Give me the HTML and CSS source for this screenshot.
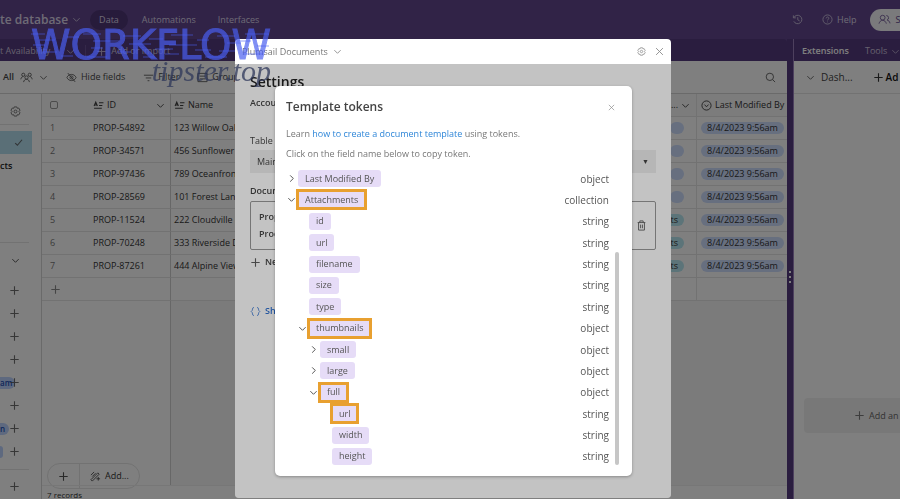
FILE: index.html
```html
<!DOCTYPE html>
<html lang="en">
<head>
    <meta charset="UTF-8">
    <meta name="viewport" content="width=device-width, initial-scale=1.0">
    <title>Template tokens</title>
    <link rel="stylesheet" href="styles.css">
</head>
<body>
    <svg class="sprite" aria-hidden="true">
        <symbol id="down" viewBox="0 0 10 10"><path d="M1.5 3.5 5 7l3.5-3.5"/></symbol>
        <symbol id="right" viewBox="0 0 10 10"><path d="M3.5 1.5 7 5 3.5 8.5"/></symbol>
        <symbol id="plus" viewBox="0 0 10 10"><path d="M5 1.2v7.6M1.2 5h7.6"/></symbol>
        <symbol id="close" viewBox="0 0 10 10"><path d="M1.2 1.2l7.6 7.6M8.8 1.2 1.2 8.8"/></symbol>
        <symbol id="check" viewBox="0 0 10 10"><path d="M2 5.5 4 7.500l4.200-5"/></symbol>
        <symbol id="gear" viewBox="0 0 12 12"><path d="M4.600 1h2.800l.5 1.500 1.600-.3 1.400 2.400L9.800 6l1.100 1.400-1.400 2.400-1.600-.3-.5 1.500H4.600l-.5-1.500-1.600.3-1.400-2.400L2.200 6 1.100 4.600l1.400-2.400 1.600.3z"/><circle cx="6" cy="6" r="1.600"/></symbol>
        <symbol id="people" viewBox="0 0 14 12"><circle cx="5" cy="4" r="2.6"/><path d="M1 10.5c.6-2.2 2-3.6 4-3.6s3.400 1.400 4 3.600M9 1.600a2.600 2.600 0 0 1 .8 5c1.700.2 2.800 1.700 3.200 3.600"/></symbol>
        <symbol id="team" viewBox="0 0 14 12"><circle cx="3.500" cy="3" r="1.700"/><circle cx="10.500" cy="3" r="1.700"/><circle cx="7" cy="6" r="1.800"/><path d="M.8 8c.3-1.800 1.200-3 2.700-3M13.200 8c-.3-1.800-1.200-3-2.700-3M3.800 11c.4-2 1.500-3 3.200-3s2.800 1 3.200 3"/></symbol>
        <symbol id="history" viewBox="0 0 12 12"><path d="M2 4a4.600 4.600 0 1 1 0 4M1.500 1.500V4.200h2.700M6.300 3.500v2.800l2 1.200"/></symbol>
        <symbol id="help" viewBox="0 0 12 12"><circle cx="6" cy="6" r="5"/><path d="M4.500 4.800c0-2 3-2 3-.2C7.500 5.800 6 5.800 6 7M6 8.300v.8"/></symbol>
        <symbol id="hide" viewBox="0 0 12 12"><path d="M1 6c2-4.500 8-4.500 10 0-2 4.500-8 4.500-10 0zM2 1.200l8 9.600"/><circle cx="6" cy="6" r="1.700"/></symbol>
        <symbol id="filter" viewBox="0 0 12 12"><path d="M1 3.500h10M3 6.500h6M5 9.500h2"/></symbol>
        <symbol id="group" viewBox="0 0 12 12"><path d="M1 1.500h10v9H1zM3 4.500h6M3 7.500h6"/></symbol>
        <symbol id="search" viewBox="0 0 12 12"><circle cx="5.300" cy="5.300" r="4"/><path d="M8.300 8.300 11 11"/></symbol>
        <symbol id="text" viewBox="0 0 10 10"><path d="M1 5.500 2.500 2 4 5.500M1.500 4.500h2M5.500 2.500h4M5.500 5h3M1 7.500h7"/></symbol>
        <symbol id="option" viewBox="0 0 12 12"><circle cx="6" cy="6" r="5"/><path d="M3.800 5 6 7.400 8.200 5"/></symbol>
        <symbol id="wand" viewBox="0 0 12 12"><path d="M1 9.500 8.500 2l1.500 1.500L2.500 11zM1 4.500 4.500 1M2.500 6 6 2.500M9 6.500v4M7 8.500h4"/></symbol>
        <symbol id="trash" viewBox="0 0 10 12"><path d="M.8 2.800h8.400M3.200 2.800V1h3.600v1.800M1.800 2.800v8.200h6.400V2.800M4 5v4M6 5v4"/></symbol>
        <symbol id="braces" viewBox="0 0 12 12"><path d="M4.200 1.500C2 1.500 3.500 5 1.300 6c2.200 1 .7 4.500 2.900 4.500M7.800 1.500c2.200 0 .7 3.500 2.900 4.500-2.200 1-.7 4.500-2.900 4.500"/></symbol>
    </svg>

    <div class="app">
        <header class="topbar">
            <h1 class="base-name">te database <svg class="icon small"><use href="#down"/></svg></h1>
            <nav class="main-nav">
                <a class="current" href="#">Data</a>
                <a href="#">Automations</a>
                <a href="#">Interfaces</a>
            </nav>
            <div class="top-actions">
                <button aria-label="History"><svg class="icon"><use href="#history"/></svg></button>
                <button><svg class="icon"><use href="#help"/></svg> Help</button>
                <button class="share"><svg class="icon wide"><use href="#people"/></svg> Sh</button>
            </div>
        </header>

        <div class="workspace">
            <main class="base">
                <div class="tabs">
                    <a href="#">t Availability</a>
                    <svg class="icon small tab-arrow"><use href="#down"/></svg>
                    <button class="add-tab"><svg class="icon"><use href="#plus"/></svg> Add or import</button>
                </div>
                <div class="toolbar">
                    <button class="view-name">All <svg class="icon wide"><use href="#team"/></svg> <svg class="icon small"><use href="#down"/></svg></button>
                    <button><svg class="icon"><use href="#hide"/></svg> Hide fields</button>
                    <button><svg class="icon"><use href="#filter"/></svg> Filter</button>
                    <button><svg class="icon"><use href="#group"/></svg> Group</button>
                    <button class="search" aria-label="Search"><svg class="icon"><use href="#search"/></svg></button>
                </div>
                <div class="content">
                    <aside class="sidebar">
                        <div class="side-head"><svg class="icon"><use href="#gear"/></svg></div>
                        <div class="side-views">
                            <div class="side-row selected"><svg class="icon"><use href="#check"/></svg></div>
                            <div class="side-row label">cts</div>
                        </div>
                        <div class="side-create">
                            <div class="side-row"><svg class="icon small dark"><use href="#down"/></svg></div>
                            <div class="side-list">
                                <div class="side-row"><svg class="icon"><use href="#plus"/></svg></div>
                                <div class="side-row"><svg class="icon"><use href="#plus"/></svg></div>
                                <div class="side-row"><svg class="icon"><use href="#plus"/></svg></div>
                                <div class="side-row"><svg class="icon"><use href="#plus"/></svg></div>
                                <div class="side-row"><span class="plan">am</span><svg class="icon"><use href="#plus"/></svg></div>
                                <div class="side-row"><svg class="icon"><use href="#plus"/></svg></div>
                                <div class="side-row"><span class="plan short">n</span><svg class="icon"><use href="#plus"/></svg></div>
                                <div class="side-row"><span class="plan empty"></span><svg class="icon"><use href="#plus"/></svg></div>
                            </div>
                        </div>
                        <div class="side-foot"><svg class="icon"><use href="#plus"/></svg></div>
                    </aside>
                    <section class="grid">
                        <table>
                            <colgroup><col class="col-num"><col class="col-id"><col><col class="col-tag"><col class="col-date"></colgroup>
                            <thead>
                                <tr>
                                    <th><input type="checkbox" aria-label="Select all"></th>
                                    <th><div class="field"><svg class="icon"><use href="#text"/></svg> ID <svg class="icon small end"><use href="#down"/></svg></div></th>
                                    <th><div class="field"><svg class="icon"><use href="#text"/></svg> Name</div></th>
                                    <th><div class="field"><span class="end">l...</span> <svg class="icon small"><use href="#down"/></svg></div></th>
                                    <th><div class="field"><svg class="icon"><use href="#option"/></svg> Last Modified By</div></th>
                                </tr>
                            </thead>
                            <tbody>
                                <tr><td>1</td><td>PROP-54892</td><td>123 Willow Oak</td><td><span class="tag">&nbsp;</span></td><td><span class="tag">8/4/2023 9:56am</span></td></tr>
                                <tr><td>2</td><td>PROP-34571</td><td>456 Sunflower .</td><td><span class="tag">&nbsp;</span></td><td><span class="tag">8/4/2023 9:56am</span></td></tr>
                                <tr><td>3</td><td>PROP-97436</td><td>789 Oceanfront</td><td><span class="tag">&nbsp;</span></td><td><span class="tag">8/4/2023 9:56am</span></td></tr>
                                <tr><td>4</td><td>PROP-28569</td><td>101 Forest Lane</td><td><span class="tag">&nbsp;</span></td><td><span class="tag">8/4/2023 9:56am</span></td></tr>
                                <tr><td>5</td><td>PROP-11524</td><td>222 Cloudville I</td><td><span class="tag cyan">cts</span></td><td><span class="tag">8/4/2023 9:56am</span></td></tr>
                                <tr><td>6</td><td>PROP-70248</td><td>333 Riverside D</td><td><span class="tag cyan">cts</span></td><td><span class="tag">8/4/2023 9:56am</span></td></tr>
                                <tr><td>7</td><td>PROP-87261</td><td>444 Alpine View</td><td><span class="tag cyan">cts</span></td><td><span class="tag">8/4/2023 9:56am</span></td></tr>
                                <tr><td><svg class="icon"><use href="#plus"/></svg></td><td></td><td></td><td></td><td></td></tr>
                            </tbody>
                        </table>
                        <div class="grid-rest">
                            <div class="add-pill">
                                <button aria-label="Add record"><svg class="icon"><use href="#plus"/></svg></button>
                                <button><svg class="icon"><use href="#wand"/></svg> Add...</button>
                            </div>
                        </div>
                        <footer class="grid-foot">7 records</footer>
                    </section>
                </div>
            </main>

            <div class="splitter"><span class="grip"></span></div>

            <aside class="extensions">
                <div class="tabs">
                    <strong>Extensions</strong>
                    <button class="tools">Tools <svg class="icon small"><use href="#down"/></svg></button>
                </div>
                <div class="toolbar">
                    <button><svg class="icon small"><use href="#down"/></svg> Dash...</button>
                    <button class="add-ext"><svg class="icon"><use href="#plus"/></svg> Ad</button>
                </div>
                <button class="add-box"><svg class="icon"><use href="#plus"/></svg> Add an</button>
            </aside>
        </div>
    </div>

    <div class="backdrop">
        <div class="modal">
            <div class="modal-head">
                <span>Plumsail Documents</span>
                <svg class="icon small"><use href="#down"/></svg>
                <button class="end" aria-label="Extension settings"><svg class="icon small"><use href="#gear"/></svg></button>
                <button aria-label="Close extension"><svg class="icon small"><use href="#close"/></svg></button>
            </div>
            <div class="modal-body">
                <h2>Settings</h2>
                <p class="account">Accou</p>
                <label for="table">Table</label>
                <div class="select">
                    <select id="table"><option>Main</option></select>
                    <span class="arrow">▼</span>
                </div>
                <p class="docs-label">Docum</p>
                <div class="doc-box">
                    <div class="doc-text">
                        <span>Prop</span>
                        <span>Proc</span>
                    </div>
                    <button aria-label="Delete"><svg class="icon"><use href="#trash"/></svg></button>
                </div>
                <button class="new"><svg class="icon"><use href="#plus"/></svg> Ne</button>
                <button class="show"><svg class="icon"><use href="#braces"/></svg> Sh</button>

                <div class="dialog-layer">
                    <div class="dialog" role="dialog" aria-labelledby="dialog-title">
                        <div class="dialog-head">
                            <h2 id="dialog-title">Template tokens</h2>
                            <button aria-label="Close"><svg class="icon"><use href="#close"/></svg></button>
                        </div>
                        <p>Learn <a href="#">how to create a document template</a> using tokens.</p>
                        <p>Click on the field name below to copy token.</p>
                        <div class="token-area">
                            <ul class="tokens">
                                <li><svg class="icon"><use href="#right"/></svg><button class="chip">Last Modified By</button><span class="type">object</span></li>
                                <li><svg class="icon"><use href="#down"/></svg><button class="chip marked">Attachments</button><span class="type">collection</span></li>
                                <li class="level-1"><button class="chip">id</button><span class="type">string</span></li>
                                <li class="level-1"><button class="chip">url</button><span class="type">string</span></li>
                                <li class="level-1"><button class="chip">filename</button><span class="type">string</span></li>
                                <li class="level-1"><button class="chip">size</button><span class="type">string</span></li>
                                <li class="level-1"><button class="chip">type</button><span class="type">string</span></li>
                                <li class="level-1"><svg class="icon"><use href="#down"/></svg><button class="chip marked">thumbnails</button><span class="type">object</span></li>
                                <li class="level-2"><svg class="icon"><use href="#right"/></svg><button class="chip">small</button><span class="type">object</span></li>
                                <li class="level-2"><svg class="icon"><use href="#right"/></svg><button class="chip">large</button><span class="type">object</span></li>
                                <li class="level-2"><svg class="icon"><use href="#down"/></svg><button class="chip marked">full</button><span class="type">object</span></li>
                                <li class="level-3"><button class="chip marked">url</button><span class="type">string</span></li>
                                <li class="level-3"><button class="chip">width</button><span class="type">string</span></li>
                                <li class="level-3"><button class="chip">height</button><span class="type">string</span></li>
                            </ul>
                            <div class="scrollbar"></div>
                        </div>
                    </div>
                </div>
            </div>
        </div>
    </div>

    <div class="watermark">
        <div class="mark-main">WORKFLOW</div>
        <div class="mark-sub">tipster.top</div>
        <svg class="mark-lines" viewBox="0 0 242 34" aria-hidden="true">
            <path d="M0 6h14M8 12h16M36 9h12M2 17h12M12 24h14M30 28h12M52 6h18M62 13h26M60 20h12M56 29h20M92 8h18M98 16h22M86 24h14M118 11h14M124 21h18M112 29h12M140 7h22M138 17h28M134 26h14M166 12h12M164 22h16M174 29h22M186 8h18M196 15h14M188 23h16M214 6h24M206 13h14M226 18h12M212 26h20"/>
        </svg>
    </div>
</body>
</html>
```
FILE: styles.css
```css
* {
    box-sizing: border-box;
}
body {
    margin: 0;
    font-family: "Open Sans", "Noto Sans", sans-serif;
    font-size: 9px;
    line-height: 12px;
    color: #333;
    overflow: hidden;
}
h1, h2, p, ul {
    margin: 0;
    padding: 0;
}
a {
    color: inherit;
    text-decoration: none;
}
button, select {
    display: flex;
    align-items: center;
    gap: 4px;
    padding: 0;
    border: none;
    background: none;
    color: inherit;
    font: inherit;
    white-space: nowrap;
}
.sprite {
    display: none;
}
.icon {
    width: 11px;
    height: 11px;
    flex-shrink: 0;
    fill: none;
    stroke: currentColor;
    stroke-width: 1;
    opacity: 0.85;
}
.icon.small {
    width: 9px;
    height: 9px;
}
.icon.wide {
    width: 13px;
}
.end {
    margin-left: auto;
}

/* application behind the modal */
.app {
    display: flex;
    flex-direction: column;
    height: 100vh;
    background: #62478f;
}
.topbar {
    display: flex;
    align-items: center;
    height: 39px;
    color: #ddd5ea;
}
.base-name {
    display: flex;
    align-items: center;
    gap: 4px;
    font-size: 12px;
    font-weight: 600;
    white-space: nowrap;
}
.main-nav {
    display: flex;
    align-items: center;
    margin-left: 9px;
    gap: 22px;
}
.main-nav .current {
    padding: 4px 9px;
    margin-right: -8px;
    border-radius: 10px;
    background: #4e3676;
}
.top-actions {
    display: flex;
    align-items: center;
    gap: 19px;
    width: 108px;
    margin-left: auto;
}
.share {
    padding: 5px 8px;
    margin-left: -5px;
    border-radius: 11px 0 0 11px;
    background: #f4f4f8;
    color: #62478f;
}
.workspace {
    display: flex;
    flex: 1;
    min-height: 0;
}
.base {
    display: flex;
    flex-direction: column;
    flex: 1;
    min-width: 0;
}
.tabs {
    display: flex;
    align-items: center;
    height: 22px;
    padding-top: 2px;
    border-top-right-radius: 4px;
    background: #543a7e;
    color: #cdc2dd;
}
.tab-arrow {
    margin: 0 10px 0 16px;
}
.add-tab {
    padding-left: 10px;
    border-left: 1px solid #6b5194;
}
.toolbar {
    display: flex;
    align-items: center;
    gap: 18px;
    height: 32px;
    padding: 0 11px 0 3px;
    background: #fff;
    color: #444;
}
.toolbar .search {
    margin-left: auto;
}
.view-name {
    gap: 6px;
    font-weight: 600;
}
.content {
    display: flex;
    flex: 1;
    min-height: 0;
    background: #fff;
    border-top: 1px solid #d5d5d5;
}
.sidebar {
    display: flex;
    flex-direction: column;
    width: 41px;
    color: #555;
}
.side-head {
    padding: 12px 10px 7px;
    height: 31px;
    margin-right: 12px;
    border-bottom: 1px solid #e4e4e4;
}
.side-views {
    flex: 1;
    padding-top: 6px;
}
.side-row {
    display: flex;
    align-items: center;
    justify-content: flex-end;
    height: 23px;
    margin-right: 9px;
    padding-right: 12px;
}
.side-row .dark {
    color: #222;
}
.side-row.selected {
    padding-right: 8px;
    background: #b4deee;
}
.side-row.label {
    justify-content: flex-start;
    font-weight: 600;
    color: #222;
}
.side-create {
    border-top: 1px solid #e4e4e4;
    margin-right: 12px;
    padding: 6px 0;
}
.side-create .side-row {
    margin-right: -3px;
}
.side-list {
    padding-top: 7px;
}
.plan {
    flex: 1;
    height: 12px;
    margin-right: -6px;
    border-radius: 0 6px 6px 0;
    background: #bcd2ff;
    color: #1c4fb4;
    font-size: 8px;
    font-weight: 600;
}
.plan.short {
    margin-right: 0;
}
.plan.empty {
    flex: none;
    width: 3px;
    margin-right: 6px;
}
.side-foot {
    height: 30px;
    margin-right: 12px;
    padding: 11px 9px;
    border-top: 1px solid #e4e4e4;
}
.grid {
    display: flex;
    flex-direction: column;
    flex: 1;
    min-width: 0;
    border-left: 1px solid #d4d4d4;
}
table {
    width: 100%;
    table-layout: fixed;
    border-collapse: separate;
    border-spacing: 0;
}
.col-num {
    width: 43px;
}
.col-id {
    width: 86px;
}
.col-tag {
    width: 110px;
}
.col-date {
    width: 90px;
}
th, td {
    height: 23px;
    padding: 0;
    border-bottom: 1px solid #e4e4e4;
    font-weight: 400;
    text-align: left;
    white-space: nowrap;
}
th {
    background: #f8f8f8;
}
th:first-child, td:first-child {
    padding-left: 8px;
}
td:first-child {
    color: #777;
}
th:nth-child(2), td:nth-child(2) {
    padding-left: 8px;
    border-right: 1px solid #cfcfcf;
}
th:nth-child(3), td:nth-child(3) {
    padding-left: 3px;
}
th:nth-child(4), td:nth-child(4) {
    padding-right: 12px;
    border-right: 1px solid #e4e4e4;
    text-align: right;
}
th:nth-child(4) {
    padding-right: 6px;
}
th:nth-child(5), td:nth-child(5) {
    padding-left: 4px;
}
td .icon {
    display: block;
}
th input {
    appearance: none;
    display: block;
    width: 8px;
    height: 8px;
    margin: 0;
    border: 1px solid #999;
    border-radius: 2px;
}
.field {
    display: flex;
    align-items: center;
    gap: 3px;
    padding-right: 5px;
}
.field .icon {
    color: #222;
}
th:nth-child(4) .field {
    padding-right: 0;
}
.tag {
    display: inline-block;
    padding: 0 6px;
    border-radius: 6px;
    background: #cfdfff;
}
.tag.cyan {
    background: #b8e8f2;
}
.grid-rest {
    display: flex;
    align-items: flex-end;
    flex: 1;
    padding: 0 5px;
    background: linear-gradient(to right, #fff 128px, #cfcfcf 128px, #cfcfcf 129px, #f7f7f7 129px);
}
.add-pill {
    display: flex;
    margin-bottom: -4px;
    border: 1px solid #e4e4e4;
    border-radius: 13px;
    background: #fff;
}
.add-pill button {
    height: 24px;
    padding: 0 10px;
}
.add-pill button + button {
    border-left: 1px solid #e4e4e4;
}
.grid-foot {
    height: 14px;
    padding: 3px 5px 0;
    border-top: 1px solid #eee;
    font-size: 8px;
}
.splitter {
    display: flex;
    align-items: center;
    justify-content: center;
    width: 6px;
    background: #543a7e;
}
.grip {
    width: 2px;
    height: 12px;
    margin-top: 16px;
    border-top: 2px solid #fff;
    border-bottom: 2px solid #fff;
    background: linear-gradient(transparent 3px, #fff 3px, #fff 5px, transparent 5px);
}
.extensions {
    display: flex;
    flex-direction: column;
    width: 107px;
    overflow: hidden;
    background: #fff;
    border-left: 1px solid #9b80bd;
}
.extensions .tabs {
    flex-shrink: 0;
    gap: 16px;
    padding-left: 8px;
    border-radius: 0;
}
.extensions strong {
    font-weight: 600;
    color: #fff;
}
.extensions .toolbar {
    height: 33px;
    padding: 0 0 0 12px;
    gap: 20px;
    border-bottom: 1px solid #e4e4e4;
    font-size: 10px;
}
.extensions .toolbar button {
    gap: 6px;
}
.extensions .toolbar .add-ext {
    gap: 2px;
    font-weight: 600;
    color: #111;
}
.add-box {
    height: 35px;
    margin: auto 0 66px 10px;
    padding-left: 50px;
    border-radius: 4px 0 0 4px;
    background: #f1f1f1;
    color: #666;
}

/* extension modal */
.backdrop {
    position: fixed;
    inset: 0;
    display: flex;
    justify-content: center;
    padding: 39px 0 1px 6px;
    background: rgba(0, 0, 0, 0.5);
}
.modal {
    display: flex;
    flex-direction: column;
    width: 436px;
    border-radius: 4px;
    overflow: hidden;
    background: #fff;
}
.modal-head {
    display: flex;
    align-items: center;
    gap: 5px;
    height: 25px;
    padding: 0 7px;
    color: #777;
}
.modal-head .end {
    margin-right: 4px;
    margin-left: auto;
}
.modal-body {
    position: relative;
    flex: 1;
    padding: 9px 15px;
    font-weight: 600;
    color: #444;
}
.modal-body h2 {
    font-size: 14px;
    font-weight: 600;
    line-height: 18px;
    color: #222;
}
.account {
    padding: 6px 0 26px;
}
.modal-body label {
    display: block;
    font-weight: 400;
}
.select {
    display: flex;
    align-items: center;
    height: 23px;
    margin-top: 3px;
    padding: 0 7px;
    background: #eee;
    font-weight: 400;
}
.select select {
    appearance: none;
    flex: 1;
}
.arrow {
    font-size: 7px;
}
.docs-label {
    padding: 12px 0 4px;
}
.doc-box {
    display: flex;
    align-items: center;
    justify-content: space-between;
    height: 49px;
    padding: 0 8px;
    border: 1px solid #999;
    border-radius: 2px;
}
.doc-text {
    display: grid;
    gap: 5px;
}
.new {
    margin-top: 6px;
}
.show {
    margin-top: 37px;
    color: #2d6fd0;
}

/* token dialog */
.dialog-layer {
    position: absolute;
    inset: 0;
    display: flex;
    padding: 22px 39px 22px 40px;
    background: rgba(0, 0, 0, 0.235);
}
.dialog {
    display: flex;
    flex-direction: column;
    flex: 1;
    padding: 12px 13px 11px 11px;
    border-radius: 5px;
    background: #fff;
    box-shadow: 0 1px 3px rgba(0, 0, 0, 0.3);
    font-weight: 400;
    color: #777;
}
.dialog-head {
    display: flex;
    align-items: center;
    justify-content: space-between;
    margin-bottom: 12px;
    padding-right: 4px;
}
.dialog-head h2 {
    font-size: 12px;
    font-weight: 600;
    color: #444;
}
.dialog-head .icon {
    width: 7px;
    height: 7px;
}
.dialog p {
    margin-bottom: 8px;
}
.dialog a {
    color: #2e86d8;
}
.token-area {
    display: flex;
    flex: 1;
    gap: 6px;
    margin-top: 2px;
}
.tokens {
    display: flex;
    flex-direction: column;
    justify-content: space-between;
    flex: 1;
    list-style: none;
}
.tokens li {
    display: flex;
    align-items: center;
    height: 17px;
    padding-left: 12px;
}
.tokens .level-1 {
    padding-left: 23px;
}
.tokens .level-2 {
    padding-left: 34px;
}
.tokens .level-3 {
    padding-left: 46px;
}
.tokens .icon {
    width: 9px;
    height: 9px;
    margin-left: -11px;
    margin-right: 2px;
    color: #222;
}
.chip {
    height: 17px;
    padding: 0 7px;
    border-radius: 3px;
    background: #e6dcf7;
    color: #555;
}
.chip.marked {
    border-radius: 0;
    outline: 3px solid #e8a030;
    outline-offset: -1px;
}
.type {
    margin-left: auto;
    font-size: 10px;
    color: #555;
}
.scrollbar {
    width: 4px;
    margin-top: 82px;
    border-radius: 2px;
    background: #c6c6c6;
}

/* watermark over the page */
.watermark {
    position: absolute;
    top: 25px;
    left: 31px;
    text-align: right;
    pointer-events: none;
}
.mark-main {
    font-family: "DejaVu Sans", sans-serif;
    font-size: 40px;
    line-height: 40px;
    color: #4a5ff0;
    -webkit-text-stroke: 1px #4a5ff0;
    opacity: 0.7;
}
.mark-sub {
    margin-top: -11px;
    font-family: "Liberation Serif", serif;
    font-style: italic;
    font-size: 30px;
    line-height: 34px;
    color: rgba(45, 55, 90, 0.75);
}
.mark-lines {
    position: absolute;
    top: 3px;
    left: 0;
    width: 242px;
    height: 34px;
    fill: none;
    stroke: #4a5ff0;
    stroke-width: 1;
    opacity: 0.6;
}
```
